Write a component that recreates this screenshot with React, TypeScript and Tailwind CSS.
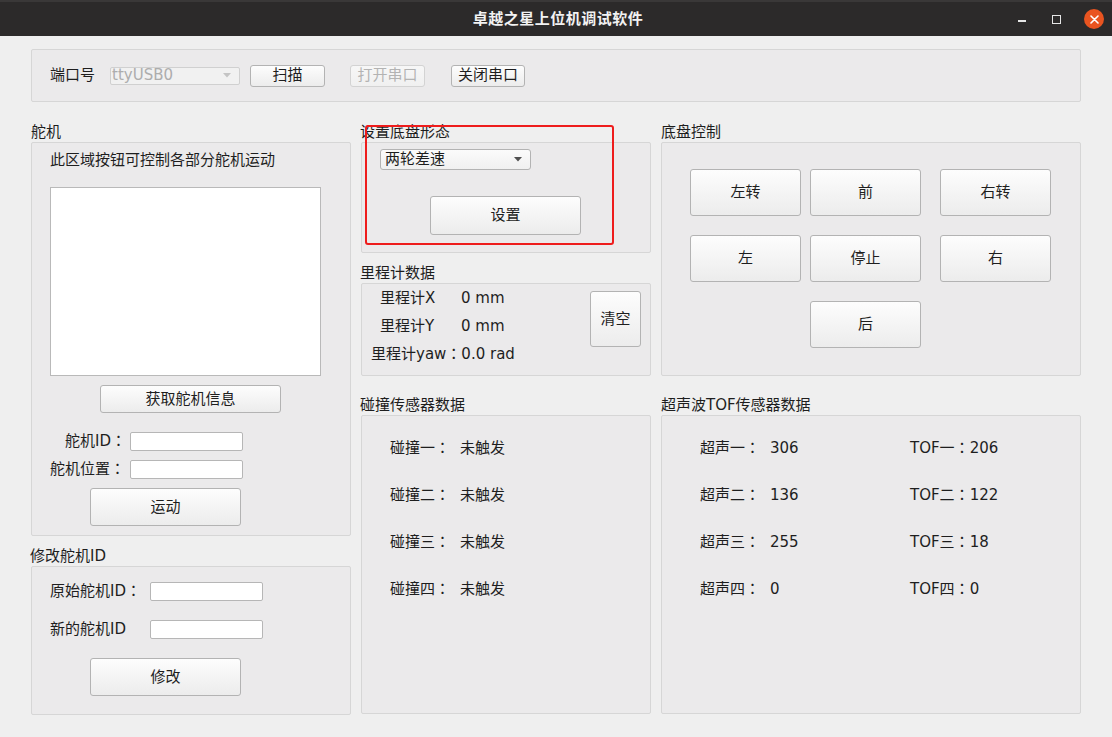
import React from 'react';

const font = "font-['DejaVu_Sans','Noto_Sans_CJK_SC',sans-serif]";

// the app renders full-width colons centred, as the TC face does
function Colon() {
  return <span className="font-['Noto_Sans_CJK_TC',sans-serif] leading-[0]">：</span>;
}

function Btn({ label, className = '', disabled = false }: { label: string; className?: string; disabled?: boolean }) {
  return (
    <button
      className={`flex items-center justify-center shrink-0 rounded-[3px] border text-[15px] leading-none bg-linear-to-b ${
        disabled
          ? 'border-[#d3d3d3] from-[#f7f7f7] to-[#f0f0f0] text-[#b3b3b3]'
          : 'border-[#b3b3b3] from-[#fdfdfd] to-[#ececec] text-[#1e1e1e]'
      } ${className}`}
    >
      {label}
    </button>
  );
}

function Field({ className = '' }: { className?: string }) {
  return <div className={`h-[19px] w-[113px] shrink-0 rounded-[2px] border border-[#b6b6b6] bg-white ${className}`} />;
}

function Caret({ color }: { color: string }) {
  return (
    <svg width="8" height="5" viewBox="0 0 8 5">
      <path d="M0 0 L8 0 L4 4.5 Z" fill={color} />
    </svg>
  );
}

function Title({ text, className = '' }: { text: string; className?: string }) {
  return <div className={`h-[20px] shrink-0 text-[15px] leading-[20px] text-[#1e1e1e] ${className}`}>{text}</div>;
}

function Group({ className = '', children }: { className?: string; children?: React.ReactNode }) {
  return <div className={`shrink-0 rounded-[2px] border border-[#d6d6d6] bg-[#ebeaeb] ${className}`}>{children}</div>;
}

export default function App() {
  const collisions = ['碰撞一', '碰撞二', '碰撞三', '碰撞四'];
  const sensors = [
    { us: '超声一', usVal: '306', tof: 'TOF一', tofVal: '206' },
    { us: '超声二', usVal: '136', tof: 'TOF二', tofVal: '122' },
    { us: '超声三', usVal: '255', tof: 'TOF三', tofVal: '18' },
    { us: '超声四', usVal: '0', tof: 'TOF四', tofVal: '0' },
  ];

  return (
    <div className={`relative flex h-[737px] w-[1112px] flex-col overflow-hidden whitespace-nowrap bg-[#efefef] text-[#1e1e1e] ${font}`}>
      {/* title bar */}
      <div className="grid h-[36px] shrink-0 grid-cols-[1fr_auto_1fr] items-center border-t-2 border-[#3a3838] bg-[#2c2a2a]">
        <div />
        <div className="pl-[4px] text-[15px] font-bold tracking-[0.5px] text-[#f2f2f2]">卓越之星上位机调试软件</div>
        <div className="flex items-center justify-end pr-[8px]">
          <div className="mt-[4px] h-[1.5px] w-[8px] bg-[#e6e6e6]" />
          <div className="ml-[26px] h-[9px] w-[9px] border-[1.5px] border-[#e6e6e6]" />
          <div className="ml-[23px] flex h-[20px] w-[20px] items-center justify-center rounded-full bg-[#e95420]">
            <svg width="9" height="9" viewBox="0 0 9 9">
              <path d="M1 1 L8 8 M8 1 L1 8" stroke="#fff" strokeWidth="1.6" strokeLinecap="round" />
            </svg>
          </div>
        </div>
      </div>

      <div className="flex flex-col pl-[31px] pt-[13px]">
        {/* port row */}
        <Group className="flex h-[53px] w-[1050px] items-center pl-[18px]">
          <span className="text-[15px] leading-none">端口号</span>
          <div className="ml-[15px] flex h-[18px] w-[130px] items-center justify-between rounded-[2px] border border-[#d0d0d0] bg-[#f1f1f1] pl-[1px] pr-[8px] text-[15px] leading-none text-[#adadad]">
            <span>ttyUSB0</span>
            <Caret color="#c4c4c4" />
          </div>
          <Btn label="扫描" className="ml-[10px] h-[22px] w-[75px]" />
          <Btn label="打开串口" disabled className="ml-[25px] h-[22px] w-[75px]" />
          <Btn label="关闭串口" className="ml-[26px] h-[22px] w-[74px]" />
        </Group>

        <div className="mt-[20px] flex gap-[10px]">
          {/* servo column */}
          <div className="flex w-[320px] flex-col">
            <Title text="舵机" />
            <Group className="flex h-[394px] flex-col pl-[18px] pt-[7px]">
              <div className="h-[20px] text-[15px] leading-[20px]">此区域按钮可控制各部分舵机运动</div>
              <div className="mt-[17px] h-[189px] w-[271px] shrink-0 border border-[#b9b9b9] bg-white" />
              <Btn label="获取舵机信息" className="ml-[50px] mt-[9px] h-[28px] w-[181px]" />
              <div className="mt-[19px] flex h-[19px] shrink-0 items-center">
                <span className="w-[76px] text-right text-[15px] leading-none">舵机ID<Colon /></span>
                <Field className="ml-[4px]" />
              </div>
              <div className="mt-[9px] flex h-[19px] shrink-0 items-center">
                <span className="w-[76px] text-[15px] leading-none">舵机位置<Colon /></span>
                <Field className="ml-[4px]" />
              </div>
              <Btn label="运动" className="ml-[40px] mt-[9px] h-[38px] w-[151px]" />
            </Group>
            <Title text="修改舵机ID" className="-ml-[1px] mt-[10px]" />
            <Group className="flex h-[149px] flex-col pl-[18px] pt-[15px]">
              <div className="flex h-[19px] shrink-0 items-center">
                <span className="w-[100px] text-[15px] leading-none">原始舵机ID<Colon /></span>
                <Field />
              </div>
              <div className="mt-[19px] flex h-[19px] shrink-0 items-center">
                <span className="w-[100px] text-[15px] leading-none">新的舵机ID</span>
                <Field />
              </div>
              <Btn label="修改" className="ml-[40px] mt-[19px] h-[38px] w-[151px]" />
            </Group>
          </div>

          {/* right area */}
          <div className="flex w-[720px] flex-col">
            <div className="flex h-[254px] gap-[10px]">
              <div className="flex w-[290px] flex-col">
                <Title text="设置底盘形态" className="-ml-[1px]" />
                <Group className="flex h-[111px] flex-col pl-[18px] pt-[6px]">
                  <div className="flex h-[21px] w-[151px] shrink-0 items-center justify-between rounded-[3px] border border-[#b3b3b3] bg-linear-to-b from-[#fbfbfb] to-[#f0f0f0] pl-[4px] pr-[8px] text-[15px] leading-none">
                    <span>两轮差速</span>
                    <Caret color="#505050" />
                  </div>
                  <Btn label="设置" className="ml-[50px] mt-[26px] h-[39px] w-[151px]" />
                </Group>
                <Title text="里程计数据" className="-ml-[1px] mt-[10px]" />
                <Group className="flex h-[93px]">
                  <div className="flex flex-col gap-[8px] pt-[4px] text-[15px] leading-[20px]">
                    <div className="flex h-[20px] pl-[18px]">
                      <span className="w-[81px]">里程计X</span>
                      <span>0 mm</span>
                    </div>
                    <div className="flex h-[20px] pl-[18px]">
                      <span className="w-[81px]">里程计Y</span>
                      <span>0 mm</span>
                    </div>
                    <div className="h-[20px] pl-[9px]">里程计yaw<Colon />0.0 rad</div>
                  </div>
                  <Btn label="清空" className="ml-auto mr-[9px] mt-[7px] h-[56px] w-[51px]" />
                </Group>
              </div>

              <div className="flex w-[420px] flex-col">
                <Title text="底盘控制" />
                <Group className="flex h-[234px] flex-col pl-[28px] pt-[26px]">
                  <div className="flex">
                    <Btn label="左转" className="h-[47px] w-[111px]" />
                    <Btn label="前" className="ml-[9px] h-[47px] w-[111px]" />
                    <Btn label="右转" className="ml-[19px] h-[47px] w-[111px]" />
                  </div>
                  <div className="mt-[19px] flex">
                    <Btn label="左" className="h-[47px] w-[111px]" />
                    <Btn label="停止" className="ml-[9px] h-[47px] w-[111px]" />
                    <Btn label="右" className="ml-[19px] h-[47px] w-[111px]" />
                  </div>
                  <div className="mt-[19px] flex">
                    <Btn label="后" className="ml-[120px] h-[47px] w-[111px]" />
                  </div>
                </Group>
              </div>
            </div>

            <div className="mt-[19px] flex gap-[10px]">
              <div className="flex w-[290px] flex-col">
                <Title text="碰撞传感器数据" className="-ml-[1px]" />
                <Group className="flex h-[299px] flex-col gap-[27px] pl-[28px] pt-[22px] text-[15px] leading-[20px]">
                  {collisions.map(c => (
                    <div key={c} className="flex h-[20px]">
                      <span className="w-[70px]">{c}<Colon /></span>
                      <span>未触发</span>
                    </div>
                  ))}
                </Group>
              </div>
              <div className="flex w-[420px] flex-col">
                <Title text="超声波TOF传感器数据" />
                <Group className="flex h-[299px] flex-col gap-[27px] pl-[38px] pt-[22px] text-[15px] leading-[20px]">
                  {sensors.map(s => (
                    <div key={s.us} className="flex h-[20px]">
                      <span className="w-[70px]">{s.us}<Colon /></span>
                      <span className="w-[140px]">{s.usVal}</span>
                      <span>{s.tof}<Colon />{s.tofVal}</span>
                    </div>
                  ))}
                </Group>
              </div>
            </div>
          </div>
        </div>
      </div>

      {/* red annotation */}
      <div className="absolute left-[365px] top-[125px] h-[120px] w-[249px] rounded-[3px] border-2 border-[#ee1c1c]" />
    </div>
  );
}
